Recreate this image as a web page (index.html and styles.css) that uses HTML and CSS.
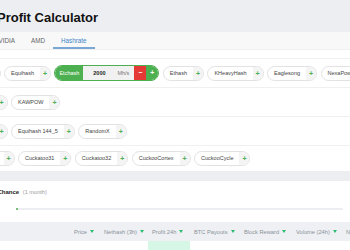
FILE: index.html
```html
<!DOCTYPE html>
<html lang="en">
<head>
  <meta charset="UTF-8" />
  <meta name="viewport" content="width=device-width, initial-scale=1.0"/>
  <title>Profit Calculator</title>
  <link rel="stylesheet" href="styles.css">
</head>
<body>
  <header class="top">
    <h1 class="title">Profit Calculator</h1>
  </header>

  <section class="card calc">
    <nav class="tabs">
      <span class="tab">NVIDIA</span>
      <span class="tab">AMD</span>
      <span class="tab active">Hashrate</span>
    </nav>

    <div class="algos">
      <div class="algo-row">
        <div class="chip stub lead-1"><span class="chip-label"></span><span class="chip-plus">+</span></div>
        <div class="chip"><span class="chip-label">Equihash</span><span class="chip-plus">+</span></div>
        <div class="chip on">
          <span class="chip-label">Etchash</span>
          <span class="chip-input"><b>2000</b><span class="unit">Mh/s</span></span>
          <span class="chip-minus">&minus;</span>
          <span class="chip-plus">+</span>
        </div>
        <div class="chip"><span class="chip-label">Ethash</span><span class="chip-plus">+</span></div>
        <div class="chip"><span class="chip-label">KHeavyHash</span><span class="chip-plus">+</span></div>
        <div class="chip"><span class="chip-label">Eaglesong</span><span class="chip-plus">+</span></div>
        <div class="chip"><span class="chip-label">NexaPow</span><span class="chip-plus">+</span></div>
      </div>

      <div class="algo-row">
        <div class="chip stub lead-2"><span class="chip-label"></span><span class="chip-plus">+</span></div>
        <div class="chip"><span class="chip-label">KAWPOW</span><span class="chip-plus">+</span></div>
      </div>

      <div class="algo-row">
        <div class="chip stub lead-2"><span class="chip-label"></span><span class="chip-plus">+</span></div>
        <div class="chip"><span class="chip-label">Equihash 144_5</span><span class="chip-plus">+</span></div>
        <div class="chip"><span class="chip-label">RandomX</span><span class="chip-plus">+</span></div>
      </div>

      <div class="algo-row last">
        <div class="chip stub lead-3"><span class="chip-label"></span><span class="chip-plus">+</span></div>
        <div class="chip"><span class="chip-label">Cuckatoo31</span><span class="chip-plus">+</span></div>
        <div class="chip"><span class="chip-label">Cuckatoo32</span><span class="chip-plus">+</span></div>
        <div class="chip"><span class="chip-label">CuckooCortex</span><span class="chip-plus">+</span></div>
        <div class="chip"><span class="chip-label">CuckooCycle</span><span class="chip-plus">+</span></div>
      </div>
    </div>
  </section>

  <section class="card chance">
    <h3 class="chance-title">Chance <span class="muted">(1 month)</span></h3>
    <div class="bar"><div class="bar-fill" style="width: 2px;"></div></div>
  </section>

  <div class="coins">
    <div class="thead">
      <span class="th"></span>
      <span class="th">Price <i class="sort"></i></span>
      <span class="th">Nethash (3h) <i class="sort"></i></span>
      <span class="th">Profit 24h <i class="sort"></i></span>
      <span class="th">BTC Payouts <i class="sort"></i></span>
      <span class="th">Block Reward <i class="sort"></i></span>
      <span class="th">Volume (24h) <i class="sort"></i></span>
      <span class="th">N</span>
    </div>
    <div class="trow">
      <span class="td"></span>
      <span class="td"></span>
      <span class="td"></span>
      <span class="td best"></span>
      <span class="td"></span>
      <span class="td"></span>
      <span class="td"></span>
      <span class="td"></span>
    </div>
  </div>
</body>
</html>
```

FILE: styles.css
```css
body {
  margin: 0;
  background: #eceef2;
  color: #222;
  font-family: "Liberation Sans", Arial, sans-serif;
  overflow: hidden;
}

.top {
  height: 32px;
}

.title {
  margin: 0 0 0 -3px;
  padding-top: 10px;
  font-size: 13px;
  line-height: 15px;
  font-weight: bold;
  color: #111;
}

.card {
  background: #ffffff;
}

/* tabs */
.tabs {
  display: flex;
  height: 18px;
  background: #f8f8f9;
  border-bottom: 1px solid #efefef;
  box-sizing: border-box;
}

.tab {
  padding: 2px 8px 0;
  line-height: 14px;
  font-size: 6.3px;
  color: #666;
  border-bottom: 2px solid transparent;
}

.tab:first-child {
  margin-left: -14px;
}

.tab.active {
  color: #3d85c6;
  border-bottom-color: #7aa7d6;
}

/* algorithm chips */
.algos {
  margin-top: 8px;
  border-top: 1px solid #f0f0f0;
}

.algo-row {
  display: flex;
  align-items: center;
  gap: 3.5px;
  height: 28px;
  border-bottom: 1px solid #f0f0f0;
  white-space: nowrap;
}

.algo-row.last {
  height: 25px;
  border-bottom: none;
}

.chip {
  display: flex;
  flex-shrink: 0;
  height: 15px;
  box-sizing: border-box;
  border: 1px solid #e2e2e2;
  border-radius: 8px;
  overflow: hidden;
  font-size: 5.5px;
  line-height: 13px;
  color: #444;
}

.chip-label {
  padding: 0 6px;
}

.chip-plus {
  width: 10px;
  text-align: center;
  background: #f4f4f4;
  color: #4caf50;
  font-size: 7px;
  font-weight: bold;
}

.stub .chip-label {
  width: 20px;
  padding: 0;
}

.lead-1 { margin-left: -31.5px; }
.lead-2 { margin-left: -24.5px; }
.lead-3 { margin-left: -17.5px; }

.chip.on {
  height: 16px;
  border-color: #4caf50;
  line-height: 14px;
}

.chip.on .chip-label {
  padding: 0 4px;
  background: #4caf50;
  color: #fff;
}

.chip-input {
  display: flex;
  justify-content: space-between;
  width: 51px;
  box-sizing: border-box;
  padding: 0 5px 0 10px;
  background: #f1f1f1;
  color: #222;
}

.chip-input .unit {
  color: #777;
}

.chip-minus {
  width: 12px;
  text-align: center;
  background: #e53935;
  color: #fff;
  font-size: 7px;
  font-weight: bold;
}

.chip.on .chip-plus {
  width: 12px;
  background: #4caf50;
  color: #fff;
}

/* chance */
.chance {
  margin-top: 10px;
  padding: 7px 7px 12px 0;
}

.chance-title {
  margin: 0 0 0 -2.5px;
  font-size: 6px;
  line-height: 8px;
  font-weight: bold;
  color: #222;
}

.muted {
  margin-left: 2px;
  font-size: 5.6px;
  font-weight: normal;
  color: #999;
}

.bar {
  margin: 12px 0 0 16px;
  height: 2px;
  border-radius: 1px;
  background: #eceef1;
}

.bar-fill {
  height: 2px;
  border-radius: 1px;
  background: #4caf50;
}

/* coin table */
.thead,
.trow {
  display: grid;
  grid-template-columns: 70px 30px 48px 42px 50px 52px 49px 60px;
}

.thead {
  height: 19px;
  background: #eef0f3;
}

.th {
  display: flex;
  align-items: center;
  gap: 3px;
  padding-left: 4px;
  font-size: 5.7px;
  color: #8a9099;
  white-space: nowrap;
}

.th:last-child {
  padding-left: 5px;
}

.sort {
  width: 0;
  height: 0;
  border-left: 2.5px solid transparent;
  border-right: 2.5px solid transparent;
  border-top: 3px solid #2dbd6e;
}

.trow {
  height: 20px;
  background: #ffffff;
}

.td.best {
  background: #d6f7e6;
}
```
